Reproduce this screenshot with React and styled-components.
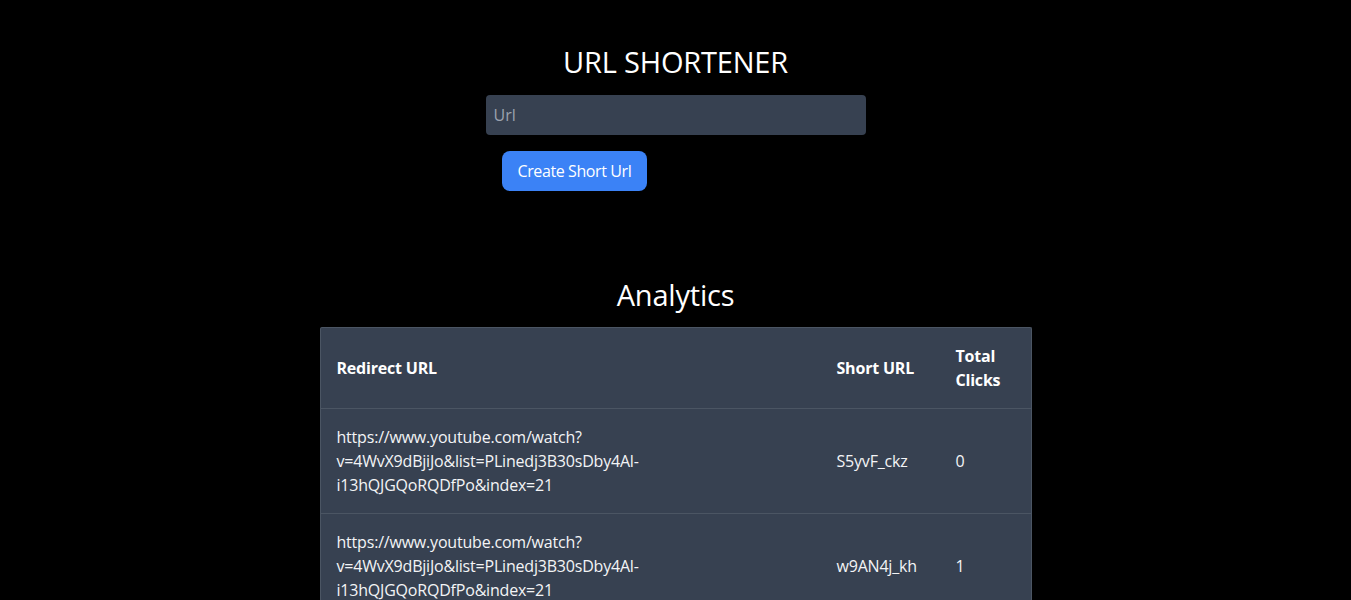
import React from 'react';
import styled, { createGlobalStyle } from 'styled-components';

const GlobalStyle = createGlobalStyle`
  html, body {
    margin: 0;
    padding: 0;
    background: #000;
  }
  body {
    font-family: "Open Sans", "Noto Sans", sans-serif;
    letter-spacing: -0.2px;
    color: #fff;
  }
`;

const Page = styled.div`
  min-height: 600px;
  background: #000;
  display: flex;
  flex-direction: column;
  align-items: center;
  padding-top: 44px;
`;

const Title = styled.h1`
  margin: 0 0 ${(p) => p.gap || 15}px;
  font-size: 29px;
  line-height: 36px;
  font-weight: 400;
  color: #fff;
`;

const Form = styled.form`
  width: 380px;
  display: flex;
  flex-direction: column;
  align-items: flex-start;
  gap: 16px;
  margin-bottom: 86px;
`;

const Input = styled.input`
  box-sizing: border-box;
  width: 100%;
  height: 40px;
  padding: 0 8px;
  border: none;
  border-radius: 4px;
  background: #374151;
  color: #fff;
  font-family: inherit;
  font-size: 16px;
  outline: none;

  &::placeholder {
    color: #9ca3af;
  }
`;

const Button = styled.button`
  margin-left: 16px;
  height: 40px;
  padding: 0 16px;
  border: none;
  border-radius: 8px;
  background: #3b82f6;
  color: #fff;
  font-family: inherit;
  font-size: 16px;
  letter-spacing: -0.4px;
  cursor: pointer;
`;

const TableWrap = styled.div`
  width: 712px;
  box-sizing: border-box;
  border: 1px solid #4b5563;
  border-bottom: none;
  border-radius: 2px;
  background: #374151;
  overflow: hidden;
`;

const Table = styled.table`
  width: 100%;
  border-collapse: collapse;
  table-layout: fixed;
  font-size: 16px;
  line-height: 24px;
`;

const Th = styled.th`
  box-sizing: border-box;
  width: ${(p) => (p.w ? `${p.w}px` : 'auto')};
  padding: 16px;
  text-align: left;
  font-weight: 700;
  color: #fff;
  vertical-align: middle;
`;

const Tr = styled.tr`
  border-top: 1px solid #4b5563;
`;

const Td = styled.td`
  padding: 16px;
  color: #f3f4f6;
  vertical-align: middle;
`;

const rows = [
  {
    url: 'https://www.youtube.com/watch?v=4WvX9dBjiJo&list=PLinedj3B30sDby4Al-i13hQJGQoRQDfPo&index=21',
    short: 'S5yvF_ckz',
    clicks: 0,
  },
  {
    url: 'https://www.youtube.com/watch?v=4WvX9dBjiJo&list=PLinedj3B30sDby4Al-i13hQJGQoRQDfPo&index=21',
    short: 'w9AN4j_kh',
    clicks: 1,
  },
];

const splitUrl = (url) => {
  // keep the same wrap points as the original screenshot
  const a = url.indexOf('?') + 1;
  const b = url.indexOf('-') + 1;
  return (
    <>
      {url.slice(0, a)}
      <br />
      {url.slice(a, b)}
      <br />
      {url.slice(b)}
    </>
  );
};

const App = () => {
  return (
    <>
      <GlobalStyle />
      <Page>
        <Title>URL SHORTENER</Title>
        <Form onSubmit={(e) => e.preventDefault()}>
          <Input placeholder="Url" />
          <Button type="submit">Create Short Url</Button>
        </Form>

        <Title gap={14}>Analytics</Title>
        <TableWrap>
          <Table>
            <thead>
              <tr>
                <Th w={500}>Redirect URL</Th>
                <Th w={119}>Short URL</Th>
                <Th>Total Clicks</Th>
              </tr>
            </thead>
            <tbody>
              {rows.map((r) => (
                <Tr key={r.short}>
                  <Td>{splitUrl(r.url)}</Td>
                  <Td>{r.short}</Td>
                  <Td>{r.clicks}</Td>
                </Tr>
              ))}
            </tbody>
          </Table>
        </TableWrap>
      </Page>
    </>
  );
};

export default App;
